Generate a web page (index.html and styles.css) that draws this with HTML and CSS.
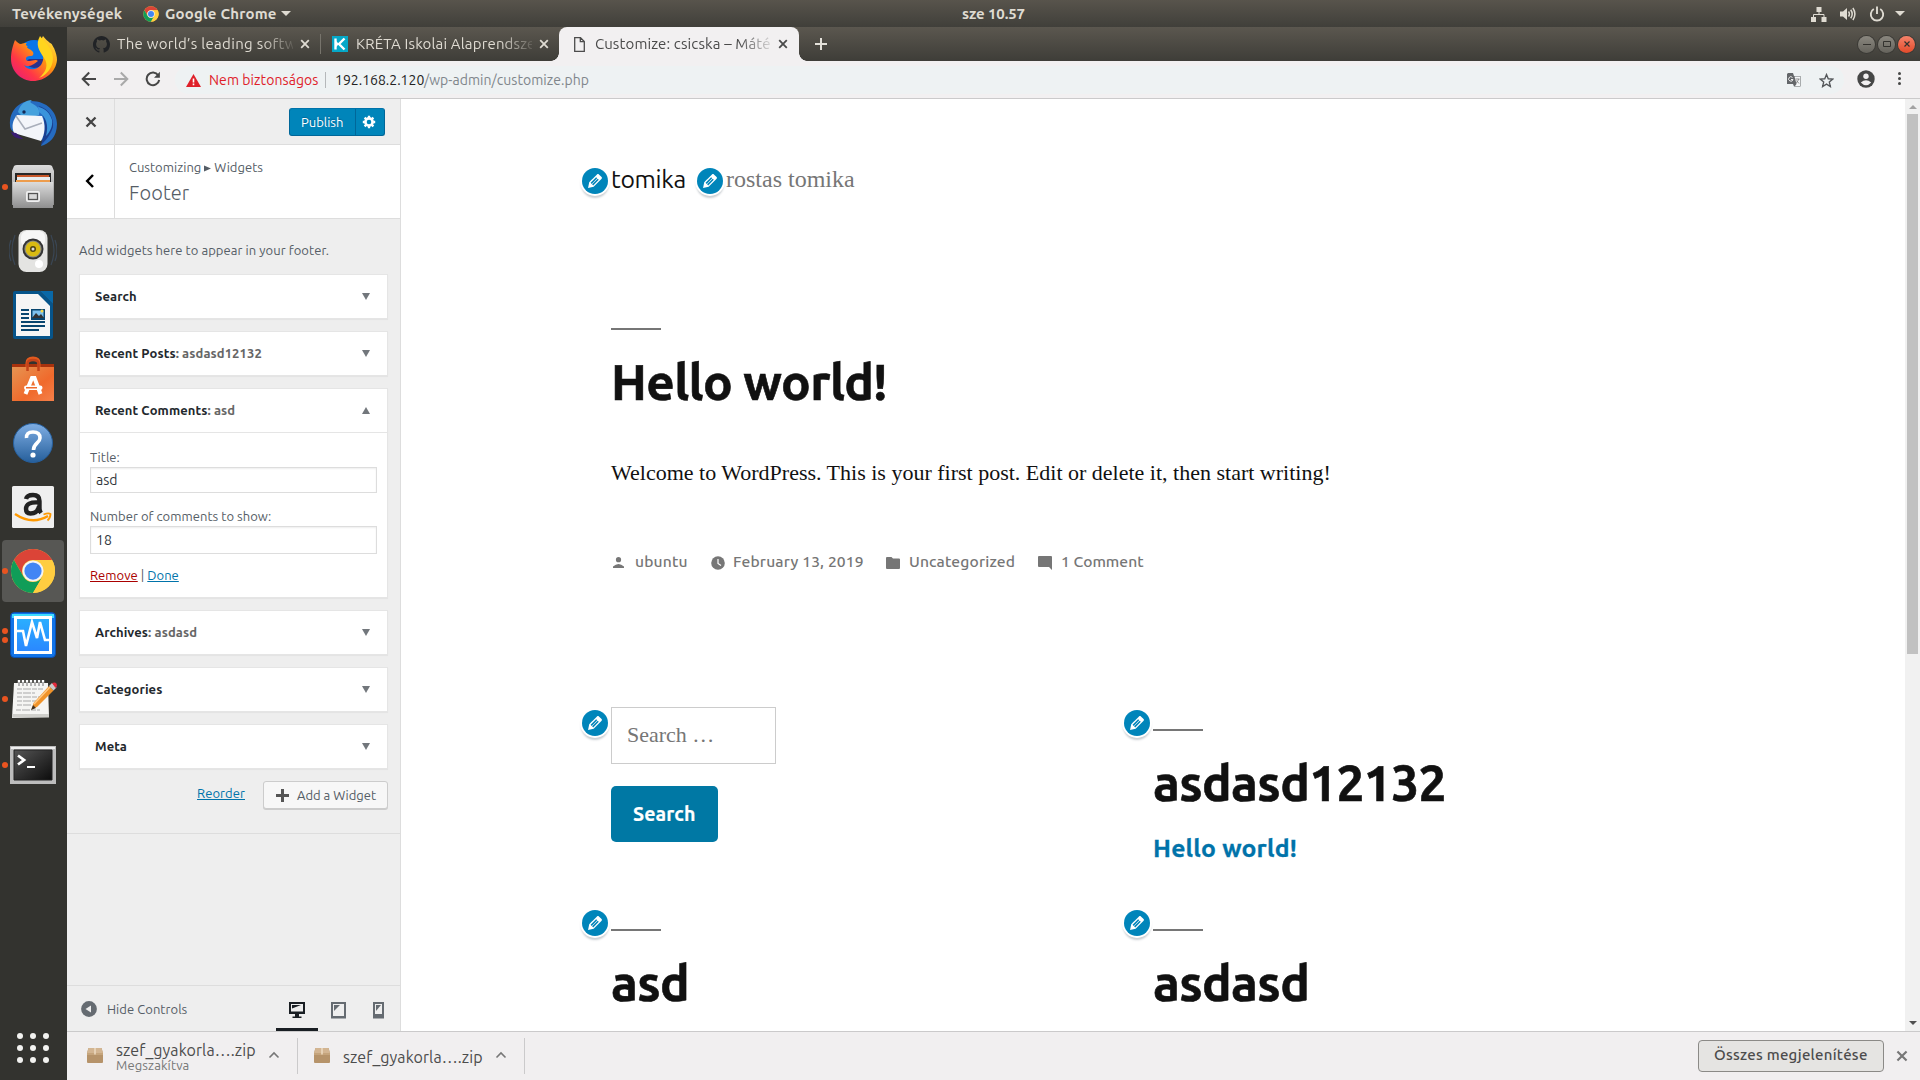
FILE: index.html
```html
<!DOCTYPE html>
<html lang="hu">
<head>
<meta charset="utf-8">
<title>Customize: csicska – Máté</title>
<link rel="stylesheet" href="styles.css">
</head>
<body>
<svg class="defs" width="0" height="0" aria-hidden="true">
  <defs>
    <symbol id="chrome" viewBox="0 0 48 48">
      <circle cx="24" cy="24" r="23" fill="#fc4"/>
      <path d="M4.1 12.5A23 23 0 0 1 43.9 12.5H24A11.500 11.500 0 0 0 14 29.700Z" fill="#db4437"/>
      <path d="M4.100 12.500A23 23 0 0 0 24 47L34 29.700A11.500 11.500 0 0 1 14 29.700Z" fill="#109d58"/>
      <path d="M43.900 12.500A23 23 0 0 1 24 47L34 29.700A11.500 11.500 0 0 0 24 12.500Z" fill="#ffcd40"/>
      <circle cx="24" cy="24" r="11" fill="#f4f4f4"/>
      <circle cx="24" cy="24" r="9" fill="#4285f4"/>
    </symbol>
    <symbol id="pencil" viewBox="0 0 20 20">
      <path d="M13.890 3.390l2.710 2.720c.460.460.420 1.240.030 1.640l-8.010 8.020-5.560 1.160 1.160-5.580s7.600-7.630 7.990-8.030c.390-.390 1.220-.390 1.680.070zm-2.730 2.790l-5.590 5.610 1.110 1.110 5.540-5.650zm-2.970 8.230l5.580-5.600-1.070-1.080-5.590 5.600z" fill="#fff"/>
    </symbol>
    <symbol id="close" viewBox="0 0 10 10"><path d="M1.200 1.200l7.600 7.600M8.800 1.200l-7.600 7.600" fill="none" stroke="currentColor" stroke-width="1.800"/></symbol>
    <symbol id="chevron" viewBox="0 0 12 8"><path d="M1.500 6.500L6 2l4.500 4.500" fill="none" stroke="currentColor" stroke-width="1.600"/></symbol>
    <symbol id="box" viewBox="0 0 16 15">
      <path d="M1.500 0h13L16 5v9a1 1 0 0 1-1 1H1a1 1 0 0 1-1-1V5z" fill="#b6936a"/>
      <path d="M1.500 0h13L16 5H0z" fill="#d3b592"/><path d="M0 5h16v2H0z" fill="#c5a47c"/>
      <path d="M7.200 0h1.600v6.500H7.200z" fill="#ecd9bf"/>
    </symbol>
  </defs>
</svg>

<header class="topbar">
  <span class="activities">Tevékenységek</span>
  <span class="appmenu"><svg width="16" height="16"><use href="#chrome"/></svg><span>Google Chrome</span><i class="tri"></i></span>
  <span class="clock">sze 10.57</span>
  <span class="tray">
    <svg width="16" height="16" viewBox="0 0 16 16" fill="#dfdbd2"><path d="M5.500 1h5v5h-5zM0 11h5v5H0zM10.500 11h5v5h-5z"/><path d="M8 6v2.500M2.500 11V8.500h10.500V11" fill="none" stroke="#dfdbd2"/></svg>
    <svg width="16" height="14" viewBox="0 0 16 14" fill="#dfdbd2"><path d="M0 4.500h3L7 1v12L3 9.500H0z"/><path d="M8.500 4.500q1.800 2.500 0 5M10.700 2.700q3 4.300 0 8.600M12.900 1q4 6 0 12" fill="none" stroke="#dfdbd2" stroke-width="1.500"/></svg>
    <svg width="16" height="16" viewBox="0 0 16 16" fill="none" stroke="#dfdbd2" stroke-width="1.900"><path d="M4.800 3A6.200 6.200 0 1 0 11.200 3M8 .5V8"/></svg>
    <i class="tri"></i>
  </span>
</header>

<div class="desktop">
  <nav class="dock">
    <div class="app"><svg width="48" height="48" viewBox="0 0 48 48">
      <defs><linearGradient id="ff" x1="1" y1="0" x2="0" y2="1"><stop offset="0" stop-color="#fff24a"/><stop offset=".4" stop-color="#ff980e"/><stop offset=".7" stop-color="#ff3647"/><stop offset="1" stop-color="#e31587"/></linearGradient></defs>
      <circle cx="25" cy="22" r="17" fill="#0a75e8"/><path d="M20 24h15q-1 9-10 9-7-1-9-6z" fill="#28318c"/>
      <path d="M6 5c2 2 4 4 6 4 2-1 4-1 6-1-2 1-1 3 1 3-2 1-1 2 3 4l2 2c1 2 0 4-2 4-4 0-5 1-5 3s2 2 4 2 6-2 8 0c-2 1-3 3-6 4-2 1-5 2-8 0 4 7 15 5 18-2 3-6 0-10-1-14-1-6 0-10 2-13 2 3 5 5 7 7 2 0 3 4 4 5 2 5 3 8 3 12C47 37 36 46 24 46S2 36 2 24C2 18 3 13 6 5z" fill="url(#ff)"/>
      <path d="M31 1c2 3 5 5 7 8l4 6c6 13-3 25-12 28 7-6 10-13 5-20-5-8-9-13-4-22z" fill="#ffd51e"/>
    </svg></div>
    <div class="app"><svg width="48" height="48" viewBox="0 0 48 48">
      <path d="M1 26C0 12 10 2 22 2c16 0 26 11 26 23 0 13-8 20-16 22l2-6-25-6C4 33 1 31 1 26z" fill="#256bc0"/>
      <path d="M9 13C11 5 17 1 23 1c-3 2-1 3 1 4 6 3 7 7 6 11L16 20z" fill="#45a1dd"/>
      <path d="M30 7c10 3 15 12 14 21-3 9-7 13-12 18 4-15 6-24-2-39z" fill="#1b3f91"/>
      <path d="M30 13c7 5 10 13 7 24 4-4 7-10 6-16C41 14 36 9 29 8z" fill="#3a94dc"/>
      <path d="M8 16l25 1c4 9 3 18-1 25L5 34C2 27 4 21 8 16z" fill="#f3f5fa"/>
      <path d="M7 17l9 13 17-6" fill="none" stroke="#a9afbb" stroke-width="1.500"/><circle cx="15" cy="13" r="1.700" fill="#132957"/>
      <path d="M2 33c2 5 6 7 12 7L7 34z" fill="#3a1c73"/>
    </svg></div>
    <div class="app running"><svg width="48" height="48" viewBox="0 0 48 48">
      <defs><linearGradient id="cab" x2="0" y2="1"><stop stop-color="#dcdcdc"/><stop offset="1" stop-color="#8f8f8f"/></linearGradient></defs>
      <path d="M5 3q1-1 3-1h32q2 0 3 1l2 5v34H3V8z" fill="url(#cab)"/><path d="M6 10h36v11H6z" fill="#272727"/>
      <path d="M8 12h32v9H8z" fill="#c8582a"/><path d="M8 14h33v3H8z" fill="#e7edef"/><path d="M7 17h34v4H7z" fill="#ed9c4c"/>
      <path d="M4 19h40v26H4z" fill="url(#cab)"/><rect x="17" y="28" width="14" height="11" rx="2" fill="#f0f0f0"/><rect x="19.500" y="30.500" width="9" height="6" fill="#d9d9d9" stroke="#555" stroke-width="1.300"/>
    </svg></div>
    <div class="app"><svg width="48" height="48" viewBox="0 0 48 48">
      <path d="M6 8q-6 15 0 30M2 13q-4 11 0 21M42 8q6 15 0 30M46 13q4 11 0 21" fill="none" stroke="#3a4654" stroke-width="1.200"/>
      <rect x="9.500" y="3" width="29" height="42" rx="8" fill="#e4e4e2"/><rect x="12" y="4" width="24" height="16" rx="6" fill="#f7f7f6"/>
      <circle cx="24" cy="22" r="10.500" fill="#343434"/><circle cx="24" cy="22" r="8.600" fill="#8a8a83"/><circle cx="24" cy="22" r="7.500" fill="#d9bb12"/><circle cx="24" cy="22" r="3" fill="#504511"/><circle cx="24" cy="22" r="1.500" fill="#ddd"/><circle cx="30" cy="37" r="4" fill="#fff"/>
    </svg></div>
    <div class="app"><svg width="48" height="48" viewBox="0 0 48 48">
      <path d="M4 2q0-2 2-2h25l13 13v33q0 2-2 2H6q-2 0-2-2z" fill="#06548a"/><path d="M31 0h13v13z" fill="#0968a7"/>
      <path d="M7 3h22l12 12v30H7z" fill="#f5f5f5"/><path d="M12 19h8M12 23h8M12 27h8M12 31h24M12 35h24M12 39h18" stroke="#08456f" stroke-width="2"/>
      <path d="M22 18h14v11H22z" fill="#08456f"/><path d="M23.500 19.500h11v7h-11z" fill="#7ec2ee"/><path d="M23 27l4-5 3 3 2-2 3 4z" fill="#333"/><circle cx="33" cy="20" r="1.500" fill="#f8d848"/>
    </svg></div>
    <div class="app"><svg width="48" height="48" viewBox="0 0 48 48">
      <defs><linearGradient id="bag" x2="1" y2="1"><stop stop-color="#e69452"/><stop offset=".6" stop-color="#f06a2c"/><stop offset="1" stop-color="#f5804a"/></linearGradient></defs>
      <path d="M3 9h42v5H3z" fill="#a8320d"/><path d="M18 16V8q0-5 6-5t6 5v8" fill="none" stroke="#e25a1e" stroke-width="3"/>
      <path d="M3 12h42v34H3z" fill="url(#bag)"/><path d="M18.500 16V9q0-4 5.500-4t5.500 4v7" fill="none" stroke="#c4431a" stroke-width="2.500"/>
      <path d="M16.500 39l6.500-16h2.500l6 16" fill="none" stroke="#fff" stroke-width="4"/><rect x="15" y="30.500" width="18.500" height="4.500" rx="2.200" fill="#fff"/><path d="M17 32h11v1.500H17z" fill="#f06a2c"/>
    </svg></div>
    <div class="app"><svg width="48" height="48" viewBox="0 0 48 48">
      <defs><linearGradient id="hlp" x2="0" y2="1"><stop stop-color="#7faee4"/><stop offset="1" stop-color="#265f9b"/></linearGradient></defs>
      <circle cx="24" cy="24" r="19.500" fill="url(#hlp)" stroke="#26609f"/><path d="M17.500 19q-.5-6 6.500-6t7 6c0 5-6.500 5-6.500 12" fill="none" stroke="#fff" stroke-width="3.600"/><circle cx="24" cy="36" r="2.600" fill="#fff"/>
    </svg></div>
    <div class="app"><svg width="48" height="48" viewBox="0 0 48 48">
      <rect x="3" y="3" width="42" height="42" rx="1.500" fill="#efefef"/>
      <path d="M17 16q1-4 7-4 6.500 0 6.500 6v7q0 3 1.500 5M30 19.500q-13-1-13 6.500 0 4.500 4.500 4.500 7 0 8.500-7" fill="none" stroke="#222" stroke-width="4.400"/>
      <path d="M6 31q17 11.500 33 2" fill="none" stroke="#f90" stroke-width="2.400"/><path d="M34.500 31.500q5-2 7-.5 0 4-3 6.500" fill="none" stroke="#f90" stroke-width="1.800"/>
    </svg></div>
    <div class="app running active"><svg width="46" height="46"><use href="#chrome"/></svg></div>
    <div class="app running twice"><svg width="48" height="48" viewBox="0 0 48 48">
      <defs><linearGradient id="mon" x2="0" y2="1"><stop stop-color="#2bb0ff"/><stop offset="1" stop-color="#2a86ff"/></linearGradient></defs>
      <rect x="1.500" y="1.500" width="45" height="45" rx="4" fill="#1274e8" stroke="#0a4fae"/><path d="M3 3h42v4H3z" fill="#3edcff"/>
      <rect x="6.500" y="6.500" width="35" height="35" fill="url(#mon)" stroke="#fff" stroke-width="3"/>
      <path d="M8 20h6l3 15 6-24 5 16 3-16 5 18h6" fill="none" stroke="#fff" stroke-width="2.600"/>
    </svg></div>
    <div class="app running"><svg width="48" height="48" viewBox="0 0 48 48">
      <path d="M5 8h34l1 34-37 1z" fill="#f5f5f3"/><path d="M3.500 39h36.500v3.500H3.300z" fill="#cfcfcb"/>
      <path d="M8 14h26M8 18h18M8 22h26M8 26h20M8 30h14M7 35h24" stroke="#aaa" stroke-width="1.200" stroke-dasharray="5 1 8 1"/>
      <path d="M10 5v6M14 5v6M18 5v6M22 5v6M26 5v6M30 5v6M34 5v6" stroke="#fff" stroke-width="2.400"/><path d="M10 7v4M14 7v4M18 7v4M22 7v4M26 7v4M30 7v4M34 7v4" stroke="#666"/>
      <path d="M23 34l1.500-6L40 11l4.500 4.500L28 32z" fill="#f0932a"/><path d="M25 29L41 12" stroke="#ffc883" stroke-width="1.500"/><path d="M40 11l3-3 4.500 4.500-3 3z" fill="#c9c9c9"/><path d="M43 8q5-2 5 3l-1.500 2z" fill="#e22a3c"/><path d="M22 35l2-5 3 3z" fill="#403020"/>
    </svg></div>
    <div class="app running terminal"><svg width="48" height="48" viewBox="0 0 48 48">
      <defs><linearGradient id="trm" x2="1" y2="1"><stop stop-color="#555"/><stop offset="1" stop-color="#0c0c0c"/></linearGradient></defs>
      <path d="M1 5h46v38H1z" fill="#bdbdbd"/><path d="M2 6h44v2H2z" fill="#eee"/><path d="M5 9h38v30H5z" fill="url(#trm)" stroke="#222"/>
      <path d="M9 14.500l6 4.500-6 4.500" fill="none" stroke="#fff" stroke-width="2.800"/><path d="M18 26h8" stroke="#fff" stroke-width="2"/>
    </svg></div>
    <div class="grid"><i></i><i></i><i></i><i></i><i></i><i></i><i></i><i></i><i></i></div>
  </nav>

  <div class="browser">
    <div class="tabstrip">
      <div class="tab github">
        <svg width="17" height="17" viewBox="0 0 16 16" fill="#212326"><path d="M8 0C3.580 0 0 3.580 0 8c0 3.540 2.290 6.530 5.470 7.590.400.070.550-.170.550-.380v-1.490c-2.230.480-2.700-.950-2.700-.950-.360-.920-.890-1.170-.890-1.170-.730-.500.060-.490.060-.490.800.060 1.230.830 1.230.830.710 1.230 1.870.870 2.330.660.070-.520.280-.870.510-1.070-1.780-.200-3.640-.890-3.640-3.950 0-.870.310-1.590.820-2.150-.080-.200-.360-1.020.080-2.120 0 0 .670-.210 2.200.820a7.600 7.600 0 0 1 4 0c1.530-1.040 2.200-.820 2.200-.820.440 1.100.160 1.920.080 2.120.510.560.820 1.270.820 2.150 0 3.070-1.870 3.750-3.650 3.950.290.250.540.730.540 1.480v2.200c0 .210.150.460.550.380A8 8 0 0 0 16 8c0-4.420-3.580-8-8-8z"/></svg>
        <span class="label">The world’s leading softw</span><svg class="x" width="10" height="10"><use href="#close"/></svg>
      </div>
      <div class="tab kreta">
        <svg width="16" height="16" viewBox="0 0 16 16"><path d="M0 0h16v16H0z" fill="#06a8c8"/><path d="M3.500 2.500v11M12.500 2.500L7 8l5.500 5.500" fill="none" stroke="#fff" stroke-width="2.400"/><path d="M4 5l3 3-3 3" fill="#fff"/></svg>
        <span class="label">KRÉTA Iskolai Alaprendsze</span><svg class="x" width="10" height="10"><use href="#close"/></svg>
      </div>
      <div class="tab current">
        <svg width="11" height="15" viewBox="0 0 11 15" fill="none" stroke="#4c4c4c" stroke-width="1.300"><path d="M.7.700h5.800l3.800 3.800v9.800H.7zM6.300.700v4h4"/></svg>
        <span class="label">Customize: csicska – Máté</span><svg class="x" width="10" height="10"><use href="#close"/></svg>
      </div>
      <svg class="newtab" width="12" height="12" viewBox="0 0 12 12"><path d="M6 0v12M0 6h12" stroke="#e4e1da" stroke-width="2"/></svg>
      <div class="winbtns"><i><svg width="8" height="8" viewBox="0 0 8 8"><path d="M0 4.500h8" stroke="#33322e"/></svg></i><i><svg width="8" height="8" viewBox="0 0 8 8"><path d="M.5 1.500h7v5h-7z" fill="none" stroke="#33322e"/></svg></i><i class="quit"><svg width="6" height="6" viewBox="0 0 6 6"><path d="M.5.500l5 5M5.500.500l-5 5" stroke="#33322e" stroke-width="1.200"/></svg></i></div>
    </div>

    <div class="toolbar">
      <svg width="16" height="16" viewBox="0 0 16 16" fill="none" stroke="#464646" stroke-width="2"><path d="M15 8H2M8.200 1.500L1.700 8l6.500 6.500"/></svg>
      <svg width="16" height="16" viewBox="0 0 16 16" fill="none" stroke="#a9a9a9" stroke-width="2"><path d="M1 8h13M7.800 1.500L14.300 8l-6.500 6.500"/></svg>
      <svg width="16" height="16" viewBox="0 0 16 16" fill="none" stroke="#464646" stroke-width="2"><path d="M13.200 4.300A6.300 6.300 0 1 0 14.200 9"/><path d="M14.900.800v6H9z" fill="#464646" stroke="none"/></svg>
      <div class="omnibox">
        <svg width="15" height="13" viewBox="0 0 15 13"><path d="M7.500 0L15 13H0z" fill="#df2029"/><path d="M6.700 4.500h1.600v4H6.700zM6.700 9.600h1.600v1.600H6.700z" fill="#fff"/></svg>
        <span class="insecure">Nem biztonságos</span><span class="url"><b>192.168.2.120</b><span>/wp-admin/customize.php</span></span>
        <svg class="translate" width="14" height="14" viewBox="0 0 14 14"><path d="M1 0h5l1 3h6.500v10.500H7L6 11H0V1z" fill="#636669"/><path d="M7.500 3.500h5.500v9.500H8l1.500-2z" fill="#f4f6f7"/><path d="M5.500 4.500A2.200 2.200 0 1 0 6 6.500H4" fill="none" stroke="#eee"/><path d="M8.500 6h4M9 10.500l3-4.500M9.500 7.500l2.500 3" stroke="#777" fill="none" stroke-width=".8"/></svg>
        <svg class="star" width="15" height="15" viewBox="0 0 24 24"><path d="M12 2.500l2.800 6.700 7.200.6-5.500 4.700 1.700 7.100L12 17.800l-6.200 3.800 1.700-7.100L2 9.800l7.200-.6z" fill="none" stroke="#55585b" stroke-width="2.200"/></svg>
      </div>
      <svg width="18" height="18" viewBox="0 0 18 18"><circle cx="9" cy="9" r="8.700" fill="#464646"/><circle cx="9" cy="6.200" r="2.700" fill="#f2f0f1"/><path d="M3.800 12.500q5.200-4.500 10.400 0-5.200 5.500-10.400 0z" fill="#f2f0f1"/></svg>
      <div class="dots"><i></i><i></i><i></i></div>
    </div>

    <div class="viewport">
      <aside class="customizer">
        <div class="actions">
          <div class="closebox"><svg width="12" height="12" viewBox="0 0 12 12"><path d="M1.500 1.500l9 9M10.500 1.500l-9 9" stroke="#444" stroke-width="2.300"/></svg></div>
          <div class="publish"><span>Publish</span><i><svg width="14" height="14" viewBox="0 0 14 14"><circle cx="7" cy="7" r="3.600" fill="none" stroke="#fff" stroke-width="2.600"/><path d="M7 .8v2M7 11.200v2M.8 7h2M11.200 7h2M2.600 2.600L4 4M10 10l1.400 1.400M2.600 11.400L4 10M10 4l1.400-1.400" stroke="#fff" stroke-width="2.300"/></svg></i></div>
        </div>
        <div class="section-title">
          <div class="backbox"><svg width="10" height="14" viewBox="0 0 10 14"><path d="M8 1L2.200 7 8 13" fill="none" stroke="#000" stroke-width="2.500"/></svg></div>
          <div class="heading"><div class="crumb"><span>Customizing</span><svg width="7" height="7" viewBox="0 0 7 7"><path d="M0 .5l7 3-7 3z" fill="#555d66"/></svg><span>Widgets</span></div><h3>Footer</h3></div>
        </div>
        <div class="widgets">
          <p class="hint">Add widgets here to appear in your footer.</p>
          <div class="widget"><div class="bar"><b>Search</b><i class="down"></i></div></div>
          <div class="widget"><div class="bar"><b>Recent Posts<em>: asdasd12132</em></b><i class="down"></i></div></div>
          <div class="widget"><div class="bar"><b>Recent Comments<em>: asd</em></b><i class="up"></i></div>
            <div class="form">
              <label>Title:</label><div class="field">asd</div>
              <label class="second">Number of comments to show:</label><div class="field tall">18</div>
              <div class="links"><a class="remove">Remove</a> <span>|</span> <a>Done</a></div>
            </div>
          </div>
          <div class="widget"><div class="bar"><b>Archives<em>: asdasd</em></b><i class="down"></i></div></div>
          <div class="widget"><div class="bar"><b>Categories</b><i class="down"></i></div></div>
          <div class="widget"><div class="bar"><b>Meta</b><i class="down"></i></div></div>
          <div class="below"><a>Reorder</a><div class="add"><svg width="13" height="13" viewBox="0 0 13 13"><path d="M6.500 0v13M0 6.500h13" stroke="#555" stroke-width="3"/></svg><span>Add a Widget</span></div></div>
        </div>
        <div class="controls">
          <svg class="collapse" width="16" height="16" viewBox="0 0 16 16"><circle cx="8" cy="8" r="7.900" fill="#656b71"/><path d="M4.500 8L10 4.500v7z" fill="#eee"/></svg>
          <span>Hide Controls</span>
          <div class="device on"><svg width="18" height="17" viewBox="0 0 18 17"><path d="M1 0h16v12h-6v2.500h2.500V16h-9v-1.500H7V12H1z" fill="#191e23"/><path d="M3 2h12v7.500H3z" fill="#eee"/><path d="M4 3h9L4 6.500z" fill="#191e23"/></svg></div>
          <div class="device"><svg width="15" height="17" viewBox="0 0 15 17"><path d="M0 0h15v16.500H0z" fill="#656b71"/><path d="M2 2h11v12H2z" fill="#eee"/><path d="M3 3h6L3 9z" fill="#656b71"/></svg></div>
          <div class="device"><svg width="11" height="17" viewBox="0 0 11 17"><path d="M0 0h11v16.500H0z" fill="#656b71"/><path d="M2 2h7v10H2z" fill="#eee"/><path d="M3 3h5L3 9z" fill="#656b71"/></svg></div>
        </div>
      </aside>

      <main class="preview">
        <div class="site-header">
          <div class="name">tomika<span class="edit"><svg width="20" height="20"><use href="#pencil"/></svg></span></div>
          <div class="tagline">rostas tomika<span class="edit"><svg width="20" height="20"><use href="#pencil"/></svg></span></div>
        </div>
        <article>
          <hr><h1>Hello world!</h1>
          <p>Welcome to WordPress. This is your first post. Edit or delete it, then start writing!</p>
          <div class="meta">
            <span class="author"><svg width="11" height="11" viewBox="0 0 11 11"><circle cx="5.500" cy="2.700" r="2.600"/><path d="M0 11V9.500Q5.500 4.500 11 9.500V11z"/></svg>ubuntu</span>
            <span class="date"><svg width="14" height="14" viewBox="0 0 14 14"><circle cx="7" cy="7" r="6.800"/><path d="M7 3v4.500l3 2" fill="none" stroke="#fff" stroke-width="1.200"/></svg>February 13, 2019</span>
            <span class="cat"><svg width="14" height="12" viewBox="0 0 14 12"><path d="M1 0h4.500L7 1.500h6a1 1 0 0 1 1 1V11a1 1 0 0 1-1 1H1a1 1 0 0 1-1-1V1a1 1 0 0 1 1-1z"/></svg>Uncategorized</span>
            <span class="com"><svg width="14" height="14" viewBox="0 0 14 14"><path d="M1 0h12a1 1 0 0 1 1 1v13l-3-3H1a1 1 0 0 1-1-1V1a1 1 0 0 1 1-1z"/></svg>1 Comment</span>
          </div>
        </article>
        <div class="footer-widgets">
          <section><span class="edit"><svg width="20" height="20"><use href="#pencil"/></svg></span><div class="searchfield">Search …</div><div class="searchbtn">Search</div></section>
          <section><span class="edit"><svg width="20" height="20"><use href="#pencil"/></svg></span><hr><h2>asdasd12132</h2><a>Hello world!</a></section>
          <section><span class="edit"><svg width="20" height="20"><use href="#pencil"/></svg></span><hr><h2>asd</h2></section>
          <section><span class="edit"><svg width="20" height="20"><use href="#pencil"/></svg></span><hr><h2>asdasd</h2></section>
        </div>
      </main>
      <div class="scrollbar"><i class="sup"></i><div class="thumb"></div><i class="sdown"></i></div>
    </div>

    <div class="downloads">
      <div class="item"><svg width="16" height="15"><use href="#box"/></svg><div class="file"><span>szef_gyakorla….zip</span><small>Megszakítva</small></div><svg class="chev" width="12" height="8"><use href="#chevron"/></svg></div>
      <div class="item"><svg width="16" height="15"><use href="#box"/></svg><div class="file"><span>szef_gyakorla….zip</span></div><svg class="chev" width="12" height="8"><use href="#chevron"/></svg></div>
      <div class="showall">Összes megjelenítése</div>
      <svg class="shut" width="12" height="12"><use href="#close"/></svg>
    </div>
  </div>
</div>
</body>
</html>
```

FILE: styles.css
```css
* { box-sizing: border-box; }
body { margin: 0; width: 1920px; height: 1080px; overflow: hidden; display: flex; flex-direction: column; font-family: Ubuntu, "Noto Sans", sans-serif; background: #33322e; }
svg { display: block; flex: none; }
i, em { font-style: normal; }
.defs { position: absolute; }

/* desktop top bar */
.topbar { height: 27px; flex: none; display: flex; align-items: center; background: linear-gradient(#58544c, #403f3a); color: #dfdbd2; font-size: 15px; font-weight: 700; line-height: 27px; white-space: nowrap; }
.activities { width: 131px; padding-left: 12px; letter-spacing: .2px; }
.appmenu { width: 831px; padding-left: 12px; display: flex; align-items: center; letter-spacing: .2px; }
.appmenu > span { margin-left: 6px; width: 111px; }
.clock { letter-spacing: -.1px; }
.tri { border: 5px solid transparent; border-top-color: #dfdbd2; border-bottom: 0; }
.appmenu .tri { margin-left: 5px; }
.tray { margin-left: auto; display: flex; align-items: center; gap: 13px; padding-right: 15px; }
.tray .tri { margin-left: -3px; }

.desktop { flex: 1; display: flex; min-height: 0; }

/* dock */
.dock { width: 67px; flex: none; display: flex; flex-direction: column; background: #33332f; }
.app { height: 64px; flex: none; display: flex; align-items: center; justify-content: center; padding-right: 1px; position: relative; }
.app.active::before { content: ""; position: absolute; left: 2px; top: 1px; width: 62px; height: 62px; border-radius: 4px; background: #575754; }
.app svg { position: relative; }
.app.running::after { content: ""; position: absolute; left: 2px; top: 29px; width: 6px; height: 6px; border-radius: 50%; background: #e95420; }
.app.twice::after { top: 25px; box-shadow: 0 9px #e95420; }
.terminal { margin-top: 2px; }
.grid { margin: auto 0 17px 17px; width: 32px; display: grid; grid-template-columns: repeat(3, 6px); gap: 6px; justify-content: space-between; }
.grid i { width: 6px; height: 6px; border-radius: 50%; background: #f2f2f0; }

.browser { flex: 1; display: flex; flex-direction: column; min-width: 0; }

/* tabs */
.tabstrip { height: 34px; flex: none; display: flex; align-items: center; background: linear-gradient(#5b574f, #3e3d38); color: #dfdbd2; font-size: 15px; line-height: 34px; }
.tab { height: 34px; display: flex; align-items: center; flex: none; position: relative; }
.label { white-space: nowrap; -webkit-mask-image: linear-gradient(90deg, #000 82%, transparent 103%); mask-image: linear-gradient(90deg, #000 82%, transparent 103%); }
.github { width: 254px; padding-left: 26px; }
.github::after { content: ""; position: absolute; right: 0; top: 7px; height: 20px; width: 1px; background: #77746c; }
.github .label { margin-left: 7px; width: 176px; letter-spacing: .3px; }
.tab .x { margin-left: 7px; }
.kreta { width: 238px; padding-left: 11px; }
.kreta .label { margin-left: 8px; width: 176px; letter-spacing: .15px; }
.current { width: 240px; padding-left: 15px; background: #f2f0f1; color: #4a4a4a; border-radius: 8px 8px 0 0; }
.current::before, .current::after { content: ""; position: absolute; bottom: 0; width: 8px; height: 8px; }
.current::before { left: -8px; background: radial-gradient(circle at 0 0, transparent 7.500px, #f2f0f1 8px); }
.current::after { right: -8px; background: radial-gradient(circle at 100% 0, transparent 7.500px, #f2f0f1 8px); }
.current .label { margin-left: 10px; width: 176px; letter-spacing: .12px; }
.newtab { margin-left: 16px; }
.winbtns { margin-left: auto; display: flex; gap: 3px; padding-right: 5px; }
.winbtns i { width: 17px; height: 17px; border-radius: 50%; display: flex; align-items: center; justify-content: center; background: linear-gradient(#8a877f, #65635c); box-shadow: 0 0 0 1px #3b3a36; }
.winbtns .quit { background: linear-gradient(#f5836a, #e24a2a); }

/* toolbar */
.toolbar { height: 38px; flex: none; display: flex; align-items: center; padding: 0 17px 2px 14px; background: #f2f0f1; border-bottom: 1px solid #cbcacb; }
.toolbar > svg { margin-right: 16px; }
.omnibox { width: 1669px; height: 28px; margin: 2px 13px 0 -2px; border-radius: 14px; background: #eef2f3; display: flex; align-items: center; font-size: 14px; padding: 1px 0 0 11px; flex: none; white-space: nowrap; }
.insecure { width: 116px; margin-left: 8px; color: #df2029; letter-spacing: .08px; }
.url { padding-left: 9px; border-left: 1px solid #b5b8ba; line-height: 16px; display: flex; }
.url b { font-weight: 400; color: #222; width: 89px; }
.url span { color: #80868b; letter-spacing: .05px; }
.translate { margin-left: auto; }
.star { margin: 0 10px 0 18px; }
.dots { display: flex; flex-direction: column; gap: 2px; margin-left: 7px; }
.dots i { width: 3px; height: 3px; border-radius: 50%; background: #464646; }

.viewport { flex: 1; display: flex; min-height: 0; background: #fff; }

/* customizer pane */
.customizer { width: 334px; flex: none; display: flex; flex-direction: column; background: #eee; border-right: 1px solid #ddd; color: #555d66; font-size: 13px; }
.actions { height: 46px; flex: none; display: flex; border-bottom: 1px solid #ddd; }
.closebox, .backbox { width: 48px; display: flex; align-items: center; justify-content: center; border-right: 1px solid #ddd; }
.backbox { padding: 0 1px 2px 0; }
.publish { margin: 9px 15px 0 auto; height: 28px; width: 96px; display: flex; background: #0085ba; border: 1px solid #006799; border-top-color: #0073aa; border-radius: 3px; color: #fff; line-height: 26px; text-shadow: 0 -1px 1px #006799; }
.publish span { width: 66px; padding-left: 11px; border-right: 1px solid #006799; }
.publish i { flex: 1; display: flex; align-items: center; justify-content: center; padding-right: 2px; }
.section-title { height: 74px; flex: none; display: flex; background: #fff; border-bottom: 1px solid #ddd; }
.heading { padding: 12px 0 0 14px; }
.crumb { display: flex; align-items: center; line-height: 20px; letter-spacing: .03px; }
.crumb svg { margin: 2px 3px 0; }
.heading h3 { margin: 2px 0 0; font-size: 20px; line-height: 28px; font-weight: 300; letter-spacing: .1px; }
.widgets { padding: 21px 12px 0; height: 615px; border-bottom: 1px solid #ddd; }
.hint { margin: 0 0 14px; line-height: 20px; letter-spacing: .06px; }
.widget { width: 309px; background: #fff; border: 1px solid #e5e5e5; box-shadow: 0 1px 1px rgba(0,0,0,.04); margin-bottom: 12px; }
.bar { height: 43px; display: flex; align-items: center; justify-content: space-between; padding: 0 17px 0 15px; color: #23282d; font-size: 13px; }
.bar b { letter-spacing: .1px; padding-bottom: 2px; }
.bar em { color: #666; }
.down { border: 4px solid transparent; border-top: 7px solid #72777c; border-bottom: 0; }
.up { border: 4px solid transparent; border-bottom: 7px solid #72777c; border-top: 0; }
.form { border-top: 1px solid #e5e5e5; height: 165px; padding: 15px 10px 0; }
.form label { display: block; line-height: 18px; letter-spacing: .04px; }
.form label.second { margin-top: 14px; }
.field { margin-top: 1px; height: 26px; border: 1px solid #ddd; box-shadow: inset 0 1px 2px rgba(0,0,0,.07); line-height: 24px; padding-left: 5px; color: #32373c; font-size: 14px; }
.field.tall { height: 28px; line-height: 27px; }
.links { margin-top: 11px; line-height: 20px; white-space: nowrap; letter-spacing: .03px; }
a { color: #0073aa; text-decoration: underline; }
.links a.remove { color: #a00; }
.below { display: flex; justify-content: flex-end; }
.below a { margin: 3px 18px 0 0; line-height: 18px; letter-spacing: .07px; }
.add { width: 125px; height: 28px; border: 1px solid #ccc; border-radius: 3px; background: #f7f7f7; box-shadow: 0 1px 0 #ccc; display: flex; align-items: center; padding-left: 12px; white-space: nowrap; }
.add span { margin-left: 8px; }
.controls { margin-top: auto; height: 46px; border-top: 1px solid #ddd; display: flex; align-items: center; padding-left: 14px; }
.collapse { margin-top: 1px; }
.controls > span { margin: 1px 0 0 10px; width: 169px; letter-spacing: .05px; }
.device { width: 40px; height: 45px; display: flex; align-items: center; justify-content: center; flex: none; border-bottom: 3px solid transparent; padding-top: 6px; }
.device.on { width: 42px; border-color: #191e23; }

/* site preview */
.preview { flex: 1; padding: 62px 0 0 210px; color: #111; overflow: hidden; }
.site-header { display: flex; align-items: flex-start; height: 36px; line-height: 37px; font-size: 24px; }
.name { width: 115px; position: relative; font-size: 24.75px; letter-spacing: -.3px; }
.tagline { position: relative; font-family: "Liberation Serif", serif; color: #767676; }
.edit { position: absolute; left: -29px; top: 3px; width: 26px; height: 26px; border-radius: 50%; background: #0085ba; box-shadow: 0 0 0 2px #fff, 0 3px 2px 1px rgba(46,68,83,.25); display: flex; align-items: center; justify-content: center; }
.name .edit, .tagline .edit { top: 7px; }
hr { width: 50px; height: 2px; margin: 0; border: 0; background: #767676; }
article { margin-top: 131px; }
h1, h2 { margin: 22px 0 0; font-size: 49.5px; line-height: 60px; font-weight: 700; letter-spacing: -.6px; white-space: nowrap; -webkit-text-stroke: .6px #111; }
article p { margin: 46px 0 0; font: 22px/30px "Liberation Serif", serif; }
.meta { margin-top: 61px; display: flex; font-size: 15.64px; line-height: 23px; height: 24px; font-weight: 500; color: #767676; fill: #767676; white-space: nowrap; letter-spacing: .15px; }
.meta span { display: flex; align-items: center; }
.meta svg { margin-top: 3px; }
.author { width: 99px; padding-left: 2px; }
.author svg { margin-right: 11px; }
.date { width: 175px; }
.date svg { margin-right: 8px; margin-left: 1px; }
.cat { width: 153px; padding-left: 1px; }
.cat svg { margin-right: 9px; }
.com { letter-spacing: 0; }
.com svg { margin-right: 9px; }
.footer-widgets { margin-top: 134px; display: grid; grid-template-columns: 542px 542px; grid-auto-rows: 200px; }
section { position: relative; }
section hr { margin-top: 22px; }
section a { display: block; margin-top: 17px; font-size: 24.75px; line-height: 37px; font-weight: 700; color: #0073aa; text-decoration: none; letter-spacing: .2px; -webkit-text-stroke: .3px #0073aa; }
.searchfield { width: 165px; height: 57px; border: 1px solid #ccc; padding-left: 15px; font: 22px/53px "Liberation Serif", serif; color: #767676; }
.searchbtn { margin-top: 22px; width: 107px; height: 56px; border-radius: 5px; background: #0078a4; color: #fff; font-size: 19.55px; font-weight: 700; line-height: 56px; padding-left: 22px; letter-spacing: .1px; -webkit-text-stroke: .2px #fff; }

/* scrollbar */
.scrollbar { width: 15px; background: #f1f1f1; display: flex; flex-direction: column; align-items: center; }
.sup { margin-top: 6px; border: 4px solid transparent; border-bottom-color: #a3a3a3; border-top: 0; }
.thumb { margin-top: 5px; width: 11px; height: 540px; background: #c1c1c1; }
.sdown { margin: auto 0 6px; border: 4px solid transparent; border-top-color: #505050; border-bottom: 0; }

/* download shelf */
.downloads { height: 49px; flex: none; border-top: 1px solid #cbcacb; background: #f1eff0; display: flex; align-items: center; color: #4c4c4c; }
.item { height: 36px; display: flex; align-items: center; border-right: 1px solid #cbcacb; width: 231px; padding-left: 20px; flex: none; }
.item + .item { width: 227px; padding-left: 16px; }
.item > svg { margin-top: -2px; }
.file { margin-left: 13px; width: 152px; display: flex; flex-direction: column; font-size: 16px; line-height: 20px; white-space: nowrap; letter-spacing: .08px; padding-bottom: 2px; }
.file small { font-size: 13px; line-height: 11px; color: #777; letter-spacing: .12px; }
.item + .item .file { padding: 2px 0 0; }
.chev { color: #777; }
.showall { margin-left: auto; width: 186px; height: 32px; border: 1px solid #8b8a87; border-radius: 4px; background: #e5e4e2; font-size: 15px; font-weight: 500; line-height: 28px; padding-left: 15px; letter-spacing: .27px; white-space: nowrap; }
.shut { color: #777; margin: 0 12px; }
```
